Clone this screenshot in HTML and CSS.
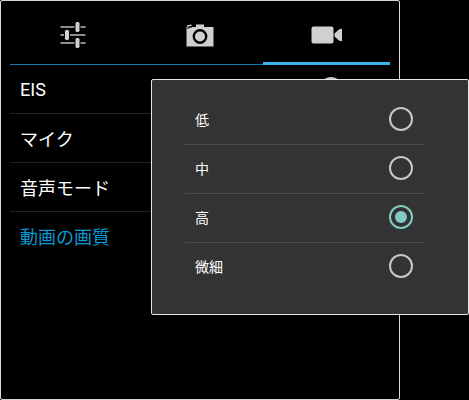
FILE: index.html
```html
<!DOCTYPE html>
<html lang="ja">
<head>
<meta charset="utf-8">
<meta name="viewport" content="width=device-width, initial-scale=1">
<title>動画の画質</title>
<link rel="stylesheet" href="styles.css">
</head>
<body>
<main class="panel">
  <nav class="tabs">
    <button class="tab" type="button" aria-label="設定">
      <svg width="28" height="28" viewBox="0 0 28 28">
        <path d="M1.500 6h25M1.500 14h25M1.500 22h25" stroke="#bcbcbc" stroke-width="1.600"/>
        <g fill="#d0d0d0" stroke="#000" stroke-width="1">
          <rect x="16" y="0.500" width="5" height="11" rx="2"/>
          <rect x="5.500" y="8.500" width="5" height="11" rx="2"/>
          <rect x="16" y="16.500" width="5" height="11" rx="2"/>
        </g>
      </svg>
    </button>
    <button class="tab" type="button" aria-label="写真">
      <svg width="28" height="28" viewBox="0 0 28 28">
        <path d="M0.500 6H10V3.500h8V6h9.500v19.500H0.500z" fill="#d0d0d0"/>
        <path d="M1 5l4.500-0.800" stroke="#d0d0d0" stroke-width="1.500"/>
        <path d="M1 7.300l5-1.500" stroke="#000" stroke-width="1"/>
        <circle cx="14" cy="15.500" r="6.200" fill="#d0d0d0" stroke="#000" stroke-width="2.400"/>
      </svg>
    </button>
    <button class="tab tab-active" type="button" aria-label="動画">
      <svg width="32" height="28" viewBox="0 0 32 28">
        <rect x="0.500" y="5.500" width="22" height="17" rx="2" fill="#d0d0d0"/>
        <path d="M23.500 12.500L28 8.500q3-1.500 3 0v11q0 1.500-3 0l-4.500-4z" fill="#d0d0d0"/>
      </svg>
    </button>
  </nav>
  <div class="settings">
    <label class="setting"><span>EIS</span><input class="toggle" type="checkbox"></label>
    <button class="setting" type="button">マイク</button>
    <button class="setting" type="button">音声モード</button>
    <button class="setting setting-active" type="button">動画の画質</button>
  </div>
</main>
<form class="menu" aria-label="動画の画質">
  <label class="option"><span>低</span><input class="radio" type="radio" name="quality"></label>
  <label class="option"><span>中</span><input class="radio" type="radio" name="quality"></label>
  <label class="option"><span>高</span><input class="radio" type="radio" name="quality" checked></label>
  <label class="option"><span>微細</span><input class="radio" type="radio" name="quality"></label>
</form>
</body>
</html>
```
FILE: styles.css
```css
* {
  box-sizing: border-box;
}

body {
  margin: 0;
  position: relative;
  background: #000;
  color: #fff;
  font-family: Roboto, "Noto Sans CJK JP", sans-serif;
}

.panel {
  min-height: 100vh;
  margin-right: 69px;
  padding: 0 9px;
  border: 1px solid #d8d8d8;
  border-radius: 2px;
}

.tabs {
  display: flex;
  height: 64px;
  background: linear-gradient(#147aa8, #147aa8) bottom / 100% 1px no-repeat;
}

.tab {
  flex: 1;
  display: flex;
  align-items: center;
  justify-content: center;
  padding: 7px 0 0;
  border: 0;
  border-bottom: 3px solid transparent;
  background: none;
}

.tab-active {
  border-bottom-color: #3cb4f4;
}

.setting {
  display: flex;
  align-items: center;
  justify-content: space-between;
  width: 100%;
  height: 49px;
  padding: 0 10px;
  border: 0;
  border-bottom: 1px solid #222;
  background: none;
  color: inherit;
  font: inherit;
  font-size: 18px;
  text-align: left;
}

.setting-active {
  border-bottom-color: transparent;
  color: #0a9bd6;
}

.toggle {
  appearance: none;
  width: 24px;
  height: 24px;
  margin: 0 37px 0 0;
  border-radius: 50%;
  background: #c8c8c8;
}

.menu {
  position: absolute;
  top: 79px;
  left: 151px;
  right: 0;
  padding: 16px 43px 22px 33px;
  border: 1px solid #e4e4e4;
  border-radius: 2px;
  background: #333;
}

.option {
  display: flex;
  align-items: center;
  justify-content: space-between;
  height: 49px;
  padding: 0 12px 2px 10px;
  border-bottom: 1px solid #4b4b4b;
  font-size: 14px;
}

.option:last-child {
  border-bottom-color: transparent;
}

.radio {
  appearance: none;
  display: grid;
  place-items: center;
  width: 24px;
  height: 24px;
  margin: 0;
  border: 2px solid #c8c8c8;
  border-radius: 50%;
}

.radio:checked {
  border-color: #80cbc4;
}

.radio:checked::before {
  content: "";
  width: 12px;
  height: 12px;
  border-radius: 50%;
  background: #80cbc4;
}
```
